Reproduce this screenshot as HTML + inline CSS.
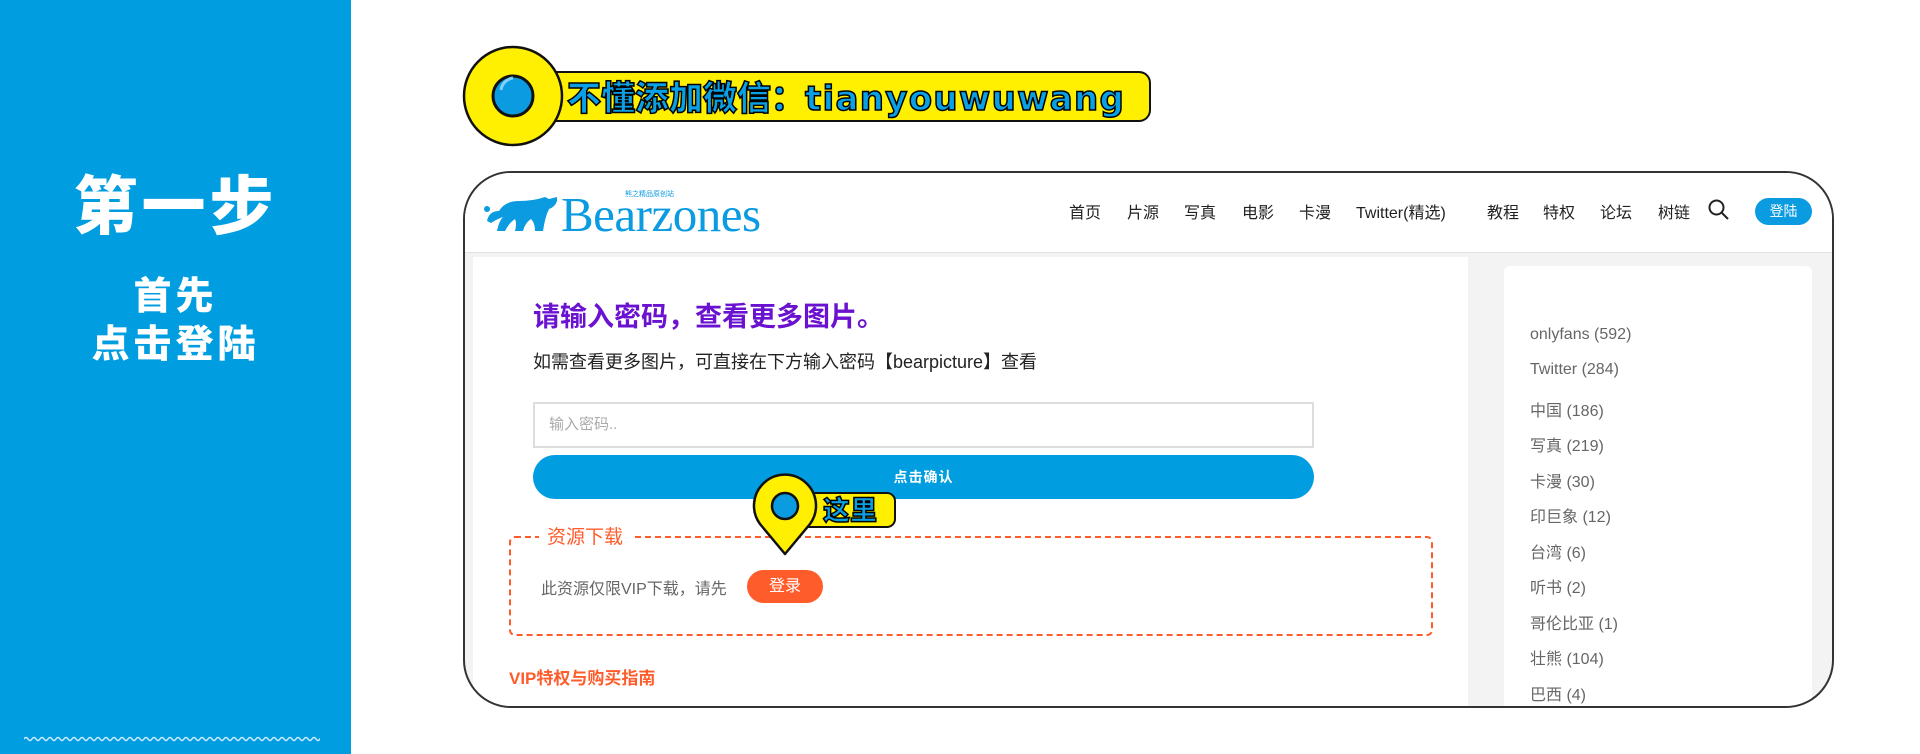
<!DOCTYPE html>
<html><head><meta charset="utf-8"><style>
*{margin:0;padding:0;box-sizing:border-box}
body{width:1920px;height:754px;background:#fff;position:relative;overflow:hidden;font-family:"Liberation Sans","Noto Sans CJK SC",sans-serif}
.abs{position:absolute}
.left{left:0;top:0;width:351px;height:754px;background:#009de0}
.lt{left:0;width:351px;text-align:center;color:#fff;font-family:"Noto Sans CJK SC",sans-serif;font-weight:900}
.frame{left:463px;top:171px;width:1371px;height:537px;border:2px solid #333;border-radius:48px;overflow:hidden;background:#f3f3f3}
.nav{top:26px;font-size:16px;color:#222;font-family:"Liberation Sans","Noto Sans CJK SC",sans-serif}
.side{left:1065px;font-size:16px;color:#666}
.blue-stroke{color:#0aa0e6;-webkit-text-stroke:1.5px #000;font-family:"Noto Sans CJK SC",sans-serif;font-weight:900}
</style></head><body>
<div class="abs left"></div>
<div class="abs lt" style="top:166px;font-size:64px;line-height:72px;letter-spacing:4px">第一步</div>
<div class="abs lt" style="top:270px;font-size:38px;line-height:46px;letter-spacing:4px">首先</div>
<div class="abs lt" style="top:318px;font-size:38px;line-height:46px;letter-spacing:4px">点击登陆</div>
<svg class="abs" style="left:24px;top:735px" width="296" height="8"><path d="M0 4 q2-3 4 0 t4 0 t4 0 t4 0 t4 0 t4 0 t4 0 t4 0 t4 0 t4 0 t4 0 t4 0 t4 0 t4 0 t4 0 t4 0 t4 0 t4 0 t4 0 t4 0 t4 0 t4 0 t4 0 t4 0 t4 0 t4 0 t4 0 t4 0 t4 0 t4 0 t4 0 t4 0 t4 0 t4 0 t4 0 t4 0 t4 0 t4 0 t4 0 t4 0 t4 0 t4 0 t4 0 t4 0 t4 0 t4 0 t4 0 t4 0 t4 0 t4 0 t4 0 t4 0 t4 0 t4 0 t4 0 t4 0 t4 0 t4 0 t4 0 t4 0 t4 0 t4 0 t4 0 t4 0 t4 0 t4 0 t4 0 t4 0 t4 0 t4 0 t4 0 t4 0 t4 0 t4 0 t4 0 t4 0" fill="none" stroke="#cfeaff" stroke-width="1.5"/></svg>

<!-- banner -->
<div class="abs" style="left:535px;top:71px;width:616px;height:51px;background:#ffef00;border:2.5px solid #111;border-radius:12px"></div>
<svg class="abs" style="left:461px;top:44px" width="104" height="104"><circle cx="52" cy="52" r="49" fill="#ffef00" stroke="#111" stroke-width="2.5"/><circle cx="52" cy="52" r="20" fill="#0a9be0" stroke="#111" stroke-width="3"/><path d="M40 46 a14 14 0 0 1 12 -12" stroke="#7fd0ff" stroke-width="3" fill="none"/></svg>
<div class="abs blue-stroke" style="left:567px;top:74px;font-size:34px;line-height:44px;letter-spacing:0px;white-space:nowrap">不懂添加微信：<span style="font-family:'DejaVu Sans',sans-serif;font-weight:bold;letter-spacing:1.3px">tianyouwuwang</span></div>

<div class="abs frame">
 <div class="abs" style="left:0;top:0;width:1371px;height:80px;background:#fff;border-bottom:1px solid #e2e2e2"></div>
 <svg class="abs" style="left:18px;top:22px" width="76" height="40"><path d="M4 26 q2-10 12-10 q6-10 20-10 q14 0 26 -4 l4 2 l8 -2 l0 4 q-2 6 -8 8 q-4 8 -6 22 l-8 0 q0-8 -4-12 q-6 4-8 12 l-8 0 q2-8 0-12 q-6 4-10 12 l-8 0 q2-10 6-14 q-6 2-12 6z" fill="#0a9be0"/><circle cx="4" cy="14" r="3" fill="#0a9be0"/></svg>
 <div class="abs" style="left:96px;top:14px;font-family:'Liberation Serif',serif;font-size:49px;color:#0a9be0;line-height:56px;letter-spacing:-0.5px">Bearzones</div>
 <div class="abs" style="left:160px;top:16px;font-size:7px;color:#0a9be0">熊之精品原创站</div>
 <div class="abs nav" style="left:604px">首页</div>
 <div class="abs nav" style="left:662px">片源</div>
 <div class="abs nav" style="left:719px">写真</div>
 <div class="abs nav" style="left:777px">电影</div>
 <div class="abs nav" style="left:834px">卡漫</div>
 <div class="abs nav" style="left:891px">Twitter(精选)</div>
 <div class="abs nav" style="left:1022px">教程</div>
 <div class="abs nav" style="left:1078px">特权</div>
 <div class="abs nav" style="left:1135px">论坛</div>
 <div class="abs nav" style="left:1193px">树链</div>
 <svg class="abs" style="left:1242px;top:25px" width="24" height="24"><circle cx="9.5" cy="9.5" r="7" fill="none" stroke="#222" stroke-width="2"/><path d="M15 15 l6 6" stroke="#222" stroke-width="2"/></svg>
 <div class="abs" style="left:1290px;top:25px;width:57px;height:27px;border-radius:14px;background:#0a9be0;color:#fff;font-size:14px;text-align:center;line-height:27px">登陆</div>

 <div class="abs" style="left:8px;top:84px;width:995px;height:460px;background:#fff"></div>
 <div class="abs" style="left:1039px;top:93px;width:308px;height:460px;background:#fff;border-radius:6px"></div>
 <div class="abs" style="left:68px;top:122px;font-size:27px;color:#6a12d0;font-weight:bold;white-space:nowrap">请输入密码，查看更多图片。</div>
 <div class="abs" style="left:68px;top:175px;font-size:18px;color:#222;white-space:nowrap">如需查看更多图片，可直接在下方输入密码【bearpicture】查看</div>
 <div class="abs" style="left:68px;top:229px;width:781px;height:46px;border:2px solid #ddd;background:#fff;font-size:15px;color:#aaa;line-height:42px;padding-left:14px">输入密码..</div>
 <div class="abs" style="left:68px;top:282px;width:781px;height:44px;border-radius:22px;background:#009de0;color:#fff;font-size:14px;font-weight:bold;text-align:center;line-height:44px;letter-spacing:1px">点击确认</div>
 <div class="abs" style="left:44px;top:363px;width:924px;height:100px;border:2.5px dashed #ff5c2b;border-radius:6px"></div>
 <div class="abs" style="left:74px;top:349px;background:#fff;padding:0 8px;font-size:19px;color:#ff5c2b">资源下载</div>
 <div class="abs" style="left:76px;top:402px;font-size:16px;color:#666;white-space:nowrap">此资源仅限VIP下载，请先</div>
 <div class="abs" style="left:282px;top:397px;width:76px;height:33px;border-radius:17px;background:#ff5c2b;color:#fff;font-size:16px;text-align:center;line-height:33px">登录</div>
 <div class="abs" style="left:44px;top:491px;font-size:17px;color:#ff5c2b;font-weight:bold">VIP特权与购买指南</div>

 <div class="abs side" style="top:153px">onlyfans (592)</div>
 <div class="abs side" style="top:188px">Twitter (284)</div>
 <div class="abs side" style="top:224px">中国 (186)</div>
 <div class="abs side" style="top:259px">写真 (219)</div>
 <div class="abs side" style="top:295px">卡漫 (30)</div>
 <div class="abs side" style="top:330px">印巨象 (12)</div>
 <div class="abs side" style="top:366px">台湾 (6)</div>
 <div class="abs side" style="top:401px">听书 (2)</div>
 <div class="abs side" style="top:437px">哥伦比亚 (1)</div>
 <div class="abs side" style="top:472px">壮熊 (104)</div>
 <div class="abs side" style="top:508px">巴西 (4)</div>
</div>

<!-- pin -->
<div class="abs" style="left:800px;top:492px;width:96px;height:36px;background:#ffef00;border:2.5px solid #111;border-radius:9px"></div>
<div class="abs blue-stroke" style="left:823px;top:490px;font-size:27px;line-height:38px">这里</div>
<svg class="abs" style="left:750px;top:472px" width="72" height="86"><path d="M35 82 L10 52 A31 31 0 1 1 60 52 Z" fill="#ffef00" stroke="#111" stroke-width="2.5" stroke-linejoin="round"/><circle cx="35" cy="34" r="13" fill="#0a9be0" stroke="#111" stroke-width="2.5"/></svg>
</body></html>
